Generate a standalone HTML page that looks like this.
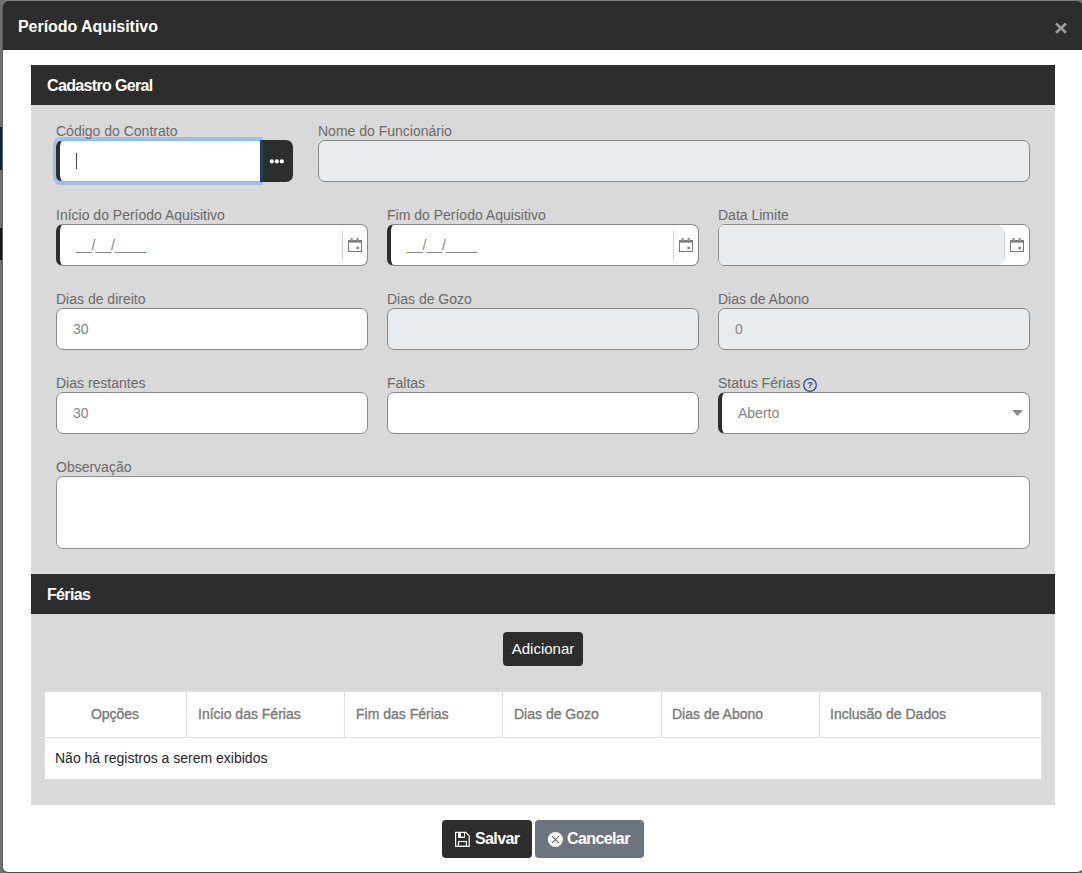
<!DOCTYPE html>
<html><head><meta charset="utf-8">
<style>
*{box-sizing:border-box;margin:0;padding:0}
html,body{width:1082px;height:873px;overflow:hidden;background:#707070;font-family:"Liberation Sans",sans-serif}
.abs{position:absolute}
svg{position:absolute;overflow:visible}
#modal{position:absolute;left:2px;top:0;width:1081px;height:873px;background:#fff;border:1px solid #5e5e5e;border-top-color:#7c7c7c;border-bottom-color:#4a4a4a;border-right:0;border-radius:6px;overflow:hidden}
#hdr{position:absolute;left:0;top:0;width:100%;height:49px;background:#2d2d2d}
#title{position:absolute;left:15px;top:17px;color:#fff;font-weight:bold;font-size:16px;line-height:18px;letter-spacing:-0.05px}
.sec{position:absolute;left:31px;width:1024px;height:40px;background:#2d2d2d;color:#fff;font-weight:bold;font-size:16px;line-height:42px;padding-left:16px;letter-spacing:-0.65px}
.grey{position:absolute;left:31px;width:1024px;background:#d9d9d9}
.lbl{position:absolute;color:#6a6a6a;font-size:14px;line-height:16px;white-space:nowrap}
.inp{position:absolute;height:42px;border:1px solid #888;border-radius:7px;background:#fff}
.dis{background:#e9ecef}
.req{border-left:4px solid #2d2d2d}
.val{position:absolute;color:#858585;font-size:14px;line-height:16px;white-space:nowrap}
.sep{position:absolute;width:1px;height:29px;background:#cfd6de}
.th{position:absolute;top:691px;height:46px;line-height:46px;color:#7a7a7a;font-size:14px;white-space:nowrap;-webkit-text-stroke:0.35px #7a7a7a}
.vl{position:absolute;top:691px;width:1px;height:46px;background:#dee2e6}
</style></head><body>
<div class="abs" style="left:0;top:127px;width:2px;height:43px;background:#0c2530"></div>
<div class="abs" style="left:0;top:228px;width:2px;height:32px;background:#151515"></div>
<div id="modal">
  <div id="hdr"><div id="title">Período Aquisitivo</div></div>
</div>
<svg style="left:1055px;top:22px" width="12" height="12" viewBox="0 0 12 12"><path d="M1 1.4 L11 10.8 M11 1.4 L1 10.8" stroke="#9c9c9c" stroke-width="2.7" stroke-linecap="butt"/></svg>

<div class="sec" style="top:65px">Cadastro Geral</div>
<div class="grey" style="top:105px;height:469px"></div>
<div class="sec" style="top:574px">Férias</div>
<div class="grey" style="top:614px;height:191px"></div>

<!-- row1 -->
<div class="lbl" style="left:56px;top:123px">Código do Contrato</div>
<div class="abs" style="left:53px;top:137px;width:210px;height:48px;background:rgba(0,123,255,.25);border-radius:8px 0 0 8px"></div>
<div class="inp req" style="left:56px;top:140px;width:205px;border-color:#80bdff;border-left-color:#2d2d2d;border-radius:7px 0 0 7px"></div>
<div class="abs" style="left:76px;top:153px;width:1px;height:16px;background:#444"></div>
<div class="abs" style="left:260px;top:140px;width:33px;height:42px;background:#2d2d2d;border-radius:0 7px 7px 0"></div>
<div class="abs" style="left:260px;top:140px;width:3px;height:42px;background:#233e5c"></div>
<svg style="left:267px;top:157px" width="20" height="9" viewBox="0 0 20 9"><circle cx="4.8" cy="4.4" r="2.1" fill="#fff"/><circle cx="9.8" cy="4.4" r="2.1" fill="#fff"/><circle cx="14.8" cy="4.4" r="2.1" fill="#fff"/></svg>
<div class="lbl" style="left:318px;top:123px">Nome do Funcionário</div>
<div class="inp dis" style="left:318px;top:140px;width:712px"></div>

<!-- row2 -->
<div class="lbl" style="left:56px;top:207px">Início do Período Aquisitivo</div>
<div class="inp req" style="left:56px;top:224px;width:312px"></div>
<div class="val" style="left:76px;top:237px">__/__/____</div>
<div class="sep" style="left:342px;top:231px"></div>
<svg class="cal" style="left:348px;top:238px" width="14" height="14" viewBox="0 0 14 14"><rect x="0.5" y="2.5" width="13" height="11" fill="none" stroke="#7a7a7a"/><rect x="0" y="2" width="14" height="2.6" fill="#7a7a7a"/><rect x="2.4" y="0" width="2.3" height="3" fill="#999"/><rect x="8.5" y="0" width="2.3" height="3" fill="#999"/><rect x="8.5" y="8.7" width="2.3" height="2.3" fill="#777"/></svg>
<div class="lbl" style="left:387px;top:207px">Fim do Período Aquisitivo</div>
<div class="inp req" style="left:387px;top:224px;width:312px"></div>
<div class="val" style="left:407px;top:237px">__/__/____</div>
<div class="sep" style="left:673px;top:231px"></div>
<svg style="left:679px;top:238px" width="14" height="14" viewBox="0 0 14 14"><rect x="0.5" y="2.5" width="13" height="11" fill="none" stroke="#7a7a7a"/><rect x="0" y="2" width="14" height="2.6" fill="#7a7a7a"/><rect x="2.4" y="0" width="2.3" height="3" fill="#999"/><rect x="8.5" y="0" width="2.3" height="3" fill="#999"/><rect x="8.5" y="8.7" width="2.3" height="2.3" fill="#777"/></svg>
<div class="lbl" style="left:718px;top:207px">Data Limite</div>
<div class="inp" style="left:718px;top:224px;width:312px"></div>
<div class="abs" style="left:719px;top:225px;width:285px;height:40px;background:#e9ecef;border-radius:5px 6px 6px 5px"></div>
<div class="sep" style="left:1004px;top:231px"></div>
<svg style="left:1010px;top:238px" width="14" height="14" viewBox="0 0 14 14"><rect x="0.5" y="2.5" width="13" height="11" fill="none" stroke="#7a7a7a"/><rect x="0" y="2" width="14" height="2.6" fill="#7a7a7a"/><rect x="2.4" y="0" width="2.3" height="3" fill="#999"/><rect x="8.5" y="0" width="2.3" height="3" fill="#999"/><rect x="8.5" y="8.7" width="2.3" height="2.3" fill="#777"/></svg>

<!-- row3 -->
<div class="lbl" style="left:56px;top:291px">Dias de direito</div>
<div class="inp" style="left:56px;top:308px;width:312px"></div>
<div class="val" style="left:73px;top:321px">30</div>
<div class="lbl" style="left:387px;top:291px">Dias de Gozo</div>
<div class="inp dis" style="left:387px;top:308px;width:312px"></div>
<div class="lbl" style="left:718px;top:291px">Dias de Abono</div>
<div class="inp dis" style="left:718px;top:308px;width:312px"></div>
<div class="val" style="left:735px;top:321px">0</div>

<!-- row4 -->
<div class="lbl" style="left:56px;top:375px">Dias restantes</div>
<div class="inp" style="left:56px;top:392px;width:312px"></div>
<div class="val" style="left:73px;top:405px">30</div>
<div class="lbl" style="left:387px;top:375px">Faltas</div>
<div class="inp" style="left:387px;top:392px;width:312px"></div>
<div class="lbl" style="left:718px;top:375px">Status Férias</div>
<svg style="left:803px;top:377.5px" width="14" height="14" viewBox="0 0 14 14"><circle cx="7" cy="7" r="6.3" fill="none" stroke="#1d4f94" stroke-width="1.3"/><text x="7" y="10.3" text-anchor="middle" font-family="Liberation Sans" font-weight="bold" font-size="9" fill="#1d4f94">?</text></svg>
<div class="inp req" style="left:718px;top:392px;width:312px"></div>
<div class="val" style="left:738px;top:405px">Aberto</div>
<svg style="left:1012px;top:410px" width="11" height="6" viewBox="0 0 11 6"><path d="M0 0 H11 L5.5 6 Z" fill="#8a8a8a"/></svg>

<!-- obs -->
<div class="lbl" style="left:56px;top:459px">Observação</div>
<div class="inp" style="left:56px;top:476px;width:974px;height:73px;border-color:#8f8f8f"></div>

<!-- ferias -->
<div class="abs" style="left:503px;top:632px;width:80px;height:34px;background:#2d2d2d;border-radius:4px;color:#fff;font-size:15px;line-height:34px;text-align:center">Adicionar</div>
<div class="abs" style="left:44px;top:691px;width:998px;height:89px;background:#fff;border:1px solid #dee2e6"></div>
<div class="abs" style="left:44px;top:737px;width:997px;height:1px;background:#dee2e6"></div>
<div class="vl" style="left:186px"></div>
<div class="vl" style="left:344px"></div>
<div class="vl" style="left:502px"></div>
<div class="vl" style="left:661px"></div>
<div class="vl" style="left:819px"></div>
<div class="th" style="left:44px;width:142px;text-align:center">Opções</div>
<div class="th" style="left:198px">Início das Férias</div>
<div class="th" style="left:356px">Fim das Férias</div>
<div class="th" style="left:514px">Dias de Gozo</div>
<div class="th" style="left:672px">Dias de Abono</div>
<div class="th" style="left:830px">Inclusão de Dados</div>
<div class="abs" style="left:55px;top:750px;color:#212529;font-size:14px;line-height:16px">Não há registros a serem exibidos</div>

<!-- footer -->
<div class="abs" style="left:442px;top:820px;width:90px;height:38px;background:#2d2d2d;border-radius:4px;color:#fff;font-weight:bold;font-size:16px;line-height:38px;padding-left:33px;letter-spacing:-0.6px">Salvar</div>
<svg style="left:455px;top:832px" width="16" height="16" viewBox="0 0 16 16"><path d="M0.6 0.4 H10.8 L14.2 3.8 V14.4 H0.6 Z" fill="none" stroke="#fff" stroke-width="1.2" stroke-linejoin="round"/><rect x="3" y="0.4" width="7" height="5.6" fill="#fff"/><rect x="6" y="1" width="3" height="3.6" fill="#2d2d2d"/><rect x="3.5" y="9.5" width="7.9" height="4.9" fill="none" stroke="#fff" stroke-width="1.15"/></svg>
<div class="abs" style="left:535px;top:820px;width:109px;height:38px;background:#6c757d;border-radius:4px;color:#fff;font-weight:bold;font-size:16px;line-height:38px;padding-left:32px;letter-spacing:-0.6px">Cancelar</div>
<svg style="left:547px;top:831px" width="16" height="16" viewBox="0 0 16 16"><circle cx="8.4" cy="8.5" r="7.6" fill="#fff"/><path d="M5.1 5.2 L11.8 11.8 M11.8 5.2 L5.1 11.8" stroke="#5f676e" stroke-width="1.05"/></svg>
</body></html>
